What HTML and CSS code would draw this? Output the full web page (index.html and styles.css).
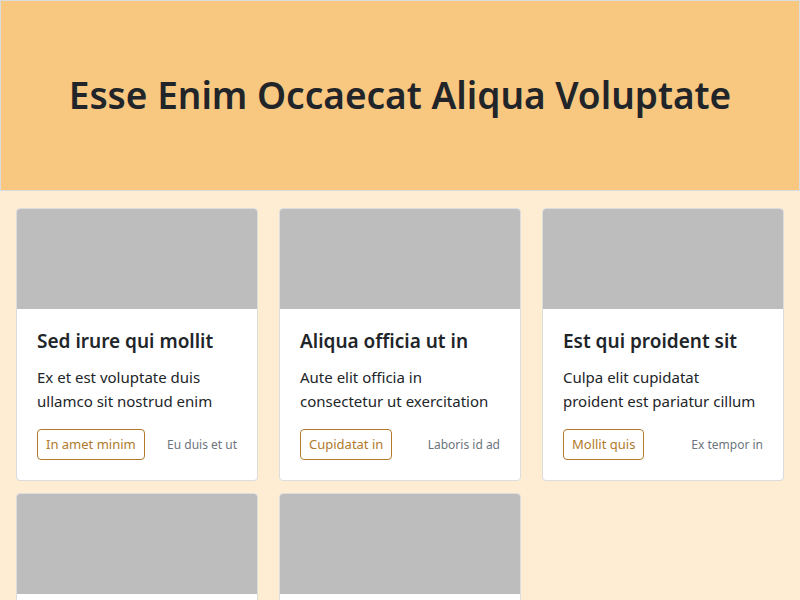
FILE: index.html
```html
<!DOCTYPE html>
<html lang="en">
<head>
<meta charset="utf-8">
<title>Esse Enim Occaecat Aliqua Voluptate</title>
<link rel="stylesheet" href="styles.css">
</head>
<body>
<header class="hero">
  <h1 class="hero-title">Esse Enim Occaecat Aliqua Voluptate</h1>
</header>
<main class="grid">
  <article class="card">
    <div class="card-img"></div>
    <div class="card-body">
      <h2 class="card-title">Sed irure qui mollit</h2>
      <p class="card-text">Ex et est voluptate duis ullamco sit nostrud enim</p>
      <div class="card-foot">
        <a class="btn" href="#">In amet minim</a>
        <span class="meta">Eu duis et ut</span>
      </div>
    </div>
  </article>
  <article class="card">
    <div class="card-img"></div>
    <div class="card-body">
      <h2 class="card-title">Aliqua officia ut in</h2>
      <p class="card-text">Aute elit officia in consectetur ut exercitation</p>
      <div class="card-foot">
        <a class="btn" href="#">Cupidatat in</a>
        <span class="meta">Laboris id ad</span>
      </div>
    </div>
  </article>
  <article class="card">
    <div class="card-img"></div>
    <div class="card-body">
      <h2 class="card-title">Est qui proident sit</h2>
      <p class="card-text">Culpa elit cupidatat proident est pariatur cillum</p>
      <div class="card-foot">
        <a class="btn" href="#">Mollit quis</a>
        <span class="meta">Ex tempor in</span>
      </div>
    </div>
  </article>
  <article class="card">
    <div class="card-img"></div>
    <div class="card-body">
      <h2 class="card-title">Lorem ipsum dolor sit</h2>
      <p class="card-text">Amet consectetur adipiscing elit sed do eiusmod</p>
      <div class="card-foot">
        <a class="btn" href="#">Tempor incid</a>
        <span class="meta">Ut labore et</span>
      </div>
    </div>
  </article>
  <article class="card">
    <div class="card-img"></div>
    <div class="card-body">
      <h2 class="card-title">Dolore magna aliqua</h2>
      <p class="card-text">Ut enim ad minim veniam quis nostrud exercitation</p>
      <div class="card-foot">
        <a class="btn" href="#">Ullamco lab</a>
        <span class="meta">Nisi ut aliq</span>
      </div>
    </div>
  </article>
</main>
</body>
</html>
```

FILE: styles.css
```css
* { box-sizing: border-box; }
html, body { margin: 0; padding: 0; }
body {
  background: #feecd3;
  font-family: "Noto Sans", "Open Sans", sans-serif;
  color: #212529;
  width: 800px;
  height: 600px;
  overflow: hidden;
}
.hero {
  height: 191px;
  background: #f8c780;
  border: 1px solid #dcdcdc;
  display: flex;
  align-items: center;
  justify-content: center;
}
.hero-title {
  margin: 0;
  font-size: 37px;
  font-weight: 600;
  line-height: 1.2;
  color: #212529;
}
.grid {
  display: grid;
  grid-template-columns: repeat(3, 1fr);
  column-gap: 21px;
  row-gap: 12px;
  padding: 17px 16px 16px;
}
.card {
  background: #fff;
  border: 1px solid #dcdcdc;
  border-radius: 4px;
  overflow: hidden;
}
.card-img {
  height: 100px;
  background: #bdbdbd;
}
.card-body {
  padding: 20px;
}
.card-title {
  margin: 0 0 12px;
  font-size: 19px;
  font-weight: 600;
  line-height: 24px;
}
.card-text {
  margin: 0 0 16px;
  font-size: 15px;
  line-height: 24px;
}
.card-foot {
  display: flex;
  align-items: center;
  justify-content: space-between;
}
.btn {
  display: inline-block;
  padding: 4px 8px;
  line-height: 21px;
  font-size: 13px;
  color: #b07a2a;
  border: 1px solid #b07a2a;
  border-radius: 4px;
  text-decoration: none;
}
.meta {
  font-size: 12px;
  color: #6c757d;
}
```
